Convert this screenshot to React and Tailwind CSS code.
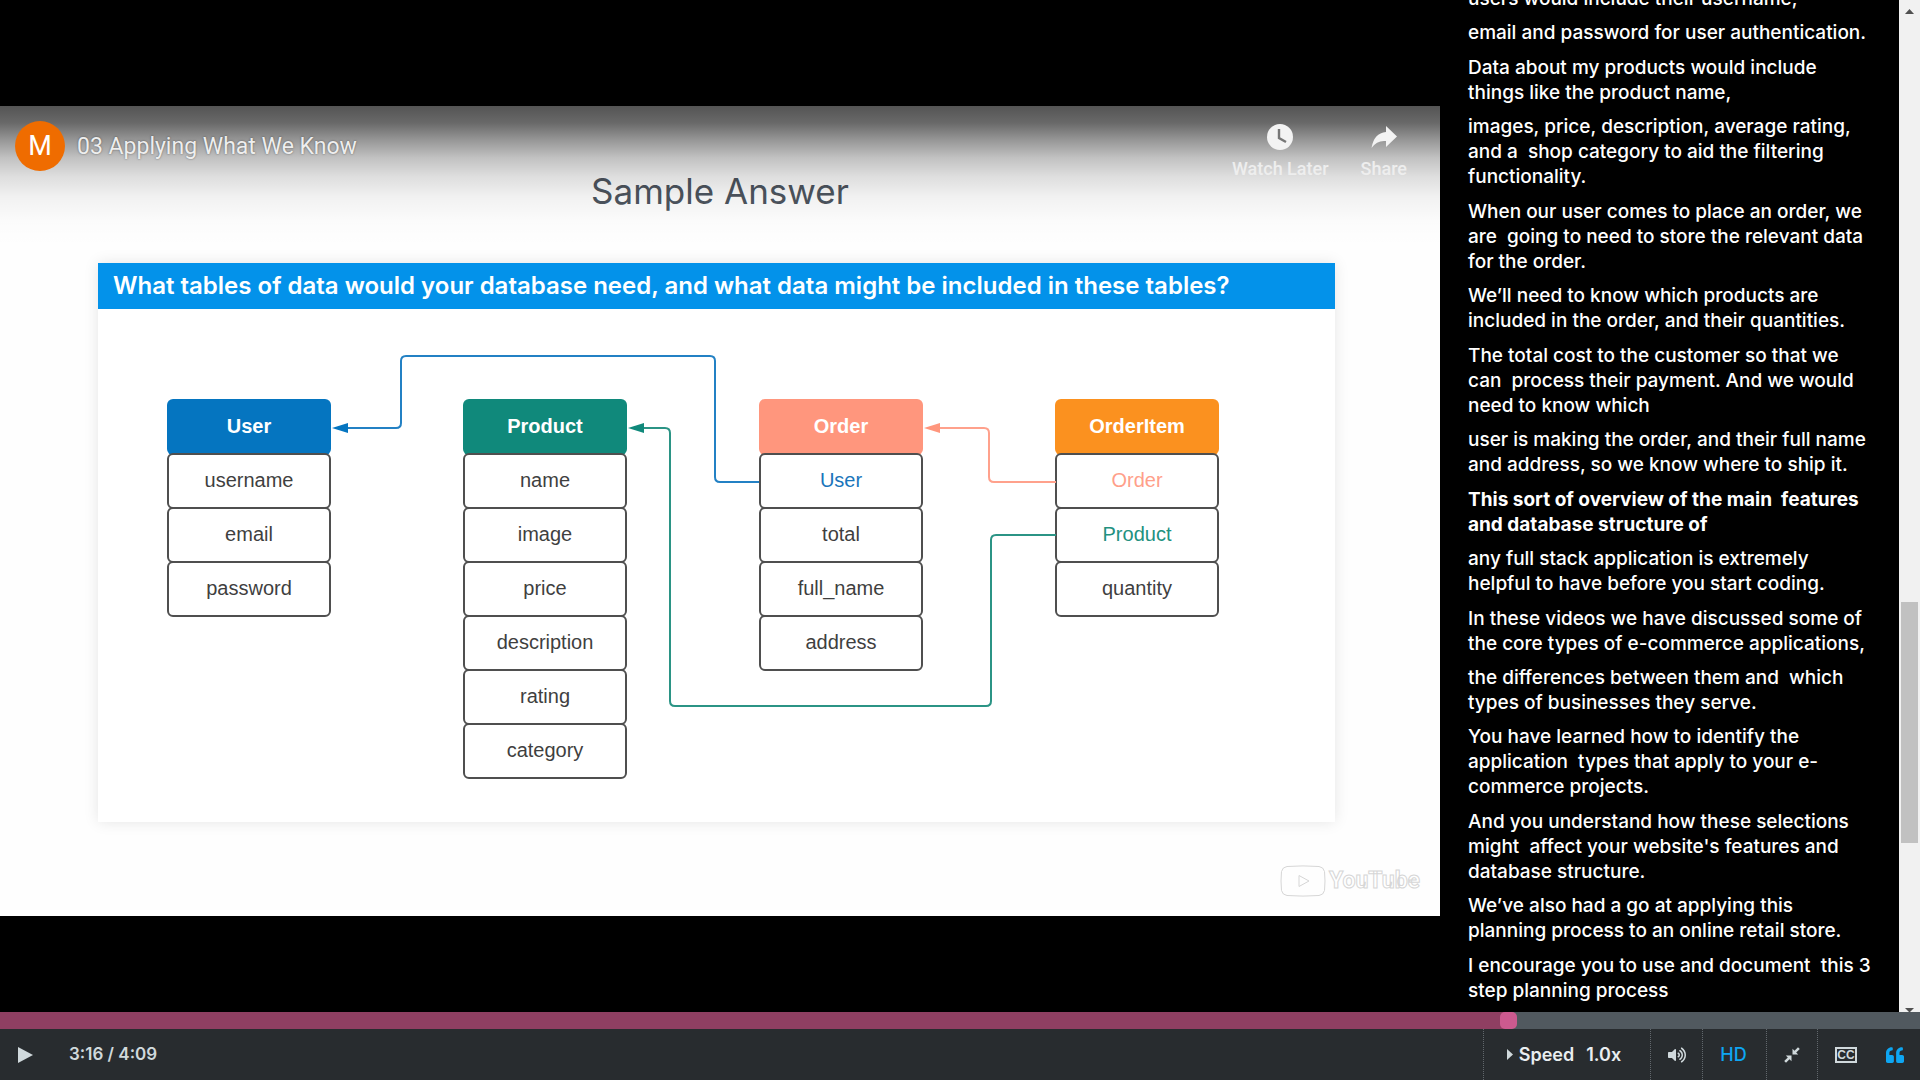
import { FaVolumeUp, FaQuoteLeft } from "react-icons/fa";

const transcript = [
  { text: "users would include their username," },
  { text: "email and password for user authentication." },
  { text: "Data about my products would include\nthings like the product name," },
  { text: "images, price, description, average rating,\nand a  shop category to aid the filtering\nfunctionality." },
  { text: "When our user comes to place an order, we\nare  going to need to store the relevant data\nfor the order." },
  { text: "We’ll need to know which products are\nincluded in the order, and their quantities." },
  { text: "The total cost to the customer so that we\ncan  process their payment. And we would\nneed to know which" },
  { text: "user is making the order, and their full name\nand address, so we know where to ship it." },
  { text: "This sort of overview of the main  features\nand database structure of", current: true },
  { text: "any full stack application is extremely\nhelpful to have before you start coding." },
  { text: "In these videos we have discussed some of\nthe core types of e-commerce applications," },
  { text: "the differences between them and  which\ntypes of businesses they serve." },
  { text: "You have learned how to identify the\napplication  types that apply to your e-\ncommerce projects." },
  { text: "And you understand how these selections\nmight  affect your website's features and\ndatabase structure." },
  { text: "We’ve also had a go at applying this\nplanning process to an online retail store." },
  { text: "I encourage you to use and document  this 3\nstep planning process" },
];

const tables = [
  { name: "User", head: "bg-[#0575c0]", rows: [["username"], ["email"], ["password"]] },
  {
    name: "Product",
    head: "bg-[#10897b]",
    rows: [["name"], ["image"], ["price"], ["description"], ["rating"], ["category"]],
  },
  {
    name: "Order",
    head: "bg-[#ff967d]",
    rows: [["User", "text-[#1a75bb]"], ["total"], ["full_name"], ["address"]],
  },
  {
    name: "OrderItem",
    head: "bg-[#fb911f]",
    rows: [["Order", "text-[#ff9f8a]"], ["Product", "text-[#22917f]"], ["quantity"]],
  },
];

function Connectors() {
  return (
    <svg
      className="pointer-events-none absolute left-0 top-0 h-[419px] w-[1052px] overflow-visible"
      viewBox="167 399 1052 419"
      fill="none"
      strokeWidth="2"
      aria-hidden="true"
    >
      <path stroke="#2381c4" d="M346 428H396Q401 428 401 423V361Q401 356 406 356H710Q715 356 715 361V477Q715 482 720 482H759" />
      <path fill="#0575c0" d="M332 428L348 423V433Z" />
      <path stroke="#2b9485" d="M642 428H665Q670 428 670 433V701Q670 706 675 706H986Q991 706 991 701V540Q991 535 996 535H1056" />
      <path fill="#10897b" d="M628 428L644 423V433Z" />
      <path stroke="#ffa18c" d="M938 428H984Q989 428 989 433V477Q989 482 994 482H1056" />
      <path fill="#ff967d" d="M924 428L940 423V433Z" />
    </svg>
  );
}

function Table({ name, head, rows }) {
  return (
    <div className="flex w-[164px] flex-col text-center font-['Liberation_Sans',sans-serif] text-xl text-[#3f3f3f]">
      <div className={`h-14 rounded-md leading-[54px] font-bold text-white ${head}`}>{name}</div>
      {rows.map(([label, tone]) => (
        <div
          key={label}
          className={`-mt-0.5 h-14 rounded-md border-2 border-[#4f4f4f] bg-white leading-[50px] ${tone || ""}`}
        >
          {label}
        </div>
      ))}
    </div>
  );
}

function Video() {
  return (
    <section className="relative flex aspect-video w-full flex-col items-center overflow-hidden bg-[#fefefe]">
      <h1 className="mt-[65px] text-[35px] leading-10 text-[#4d555f]">Sample Answer</h1>
      <div className="mt-[52px] mr-[7px] h-[559px] w-[1237px] bg-white shadow-[0_0_14px_rgba(0,0,0,0.1)]">
        <h2 className="h-[46px] bg-[#0392ea] pl-[15px] text-2xl leading-[46px] font-semibold whitespace-nowrap text-white">
          What tables of data would your database need, and what data might be included in these tables?
        </h2>
        <div className="relative mt-[90px] ml-[69px] flex items-start gap-[132px]">
          {tables.map((t) => (
            <Table key={t.name} {...t} />
          ))}
          <Connectors />
        </div>
      </div>

      <header className="absolute inset-x-0 top-0 flex h-[140px] items-start bg-[linear-gradient(to_bottom,rgba(0,0,0,0.67)_0%,rgba(0,0,0,0.59)_12%,rgba(0,0,0,0.41)_24%,rgba(0,0,0,0.24)_37%,rgba(0,0,0,0.13)_50%,rgba(0,0,0,0.05)_65%,rgba(0,0,0,0.01)_82%,transparent_100%)] pt-[15px] pr-[33px] pl-[15px] font-[Roboto,sans-serif] text-[#eee]">
        <a href="#channel" className="flex size-[50px] items-center justify-center rounded-full bg-[#ef6c00] text-[27px] text-white">
          M
        </a>
        <a href="#video" className="ml-3 text-[23px] leading-[52px] [text-shadow:0_0_2px_rgba(0,0,0,0.5)]">
          03 Applying What We Know
        </a>
        <div className="ml-auto flex gap-8 text-lg leading-6 font-medium [text-shadow:0_0_3px_rgba(0,0,0,0.6)]">
          <button className="flex flex-col items-center gap-1">
            <svg className="h-8 w-9" viewBox="0 0 36 32" aria-hidden="true">
              <circle cx="18" cy="16" r="13" fill="#f3f3f3" />
              <path d="M17 8V17L24 21" fill="none" stroke="#777" strokeWidth="2.4" />
            </svg>
            Watch Later
          </button>
          <button className="flex flex-col items-center gap-1">
            <svg className="h-8 w-9" viewBox="0 0 36 32" aria-hidden="true">
              <path fill="#f3f3f3" d="M20 5L31 15.500L20 26V20Q11 19 5.500 27Q8 12 20 11Z" />
            </svg>
            Share
          </button>
        </div>
      </header>

      <a
        href="#youtube"
        aria-label="YouTube"
        className="absolute right-5 bottom-[17px] flex items-center gap-[3px] font-[Roboto,sans-serif] text-[23px] leading-9 font-bold text-white [-webkit-text-stroke:1px_#d6d6d6]"
      >
        <svg className="h-8 w-[46px]" viewBox="0 0 46 32" fill="none" stroke="#d6d6d6" aria-hidden="true">
          <path d="M7 1.500Q23 .3 39 1.500Q43.500 2 44.500 6.500Q45.500 16 44.500 25.500Q43.500 30 39 30.500Q23 31.700 7 30.500Q2.500 30 1.500 25.500Q.5 16 1.500 6.500Q2.500 2 7 1.500Z" />
          <path d="M19 10.500V21.500L29 16Z" />
        </svg>
        YouTube
      </a>
    </section>
  );
}

function Transcript() {
  return (
    <aside className="flex w-1/4 overflow-hidden">
      <ol className="flex flex-1 flex-col justify-between pb-[9px] pl-[28px] text-[19px] leading-[25px] font-medium whitespace-pre text-white">
        {transcript.map(({ text, current }) => (
          <li key={text} className={`first:-mt-3.5 ${current ? "font-bold" : ""}`}>
            {text}
          </li>
        ))}
      </ol>
      <div className="flex w-[21px] flex-col items-center bg-[#f1f1f1] pt-[9px]">
        <svg className="h-[5px] w-[9px]" viewBox="0 0 9 5" fill="#505050" aria-hidden="true">
          <path d="M0 5L4.500 0L9 5Z" />
        </svg>
        <div className="mt-[588px] h-[241px] w-[17px] bg-[#c1c1c1]" />
        <svg className="mt-auto h-1 w-[9px]" viewBox="0 0 9 4" fill="#505050" aria-hidden="true">
          <path d="M0 0H9L5 4H4Z" />
        </svg>
      </div>
    </aside>
  );
}

function Controls() {
  const cell = "flex items-center justify-center border-l border-dotted border-[#62686d]";
  return (
    <footer className="bg-[#282c2f] text-[#d0d9dc]">
      <input
        type="range"
        aria-label="Video position"
        min="0"
        max="1000"
        defaultValue="788"
        className="block h-[17px] w-full appearance-none bg-[linear-gradient(to_right,#8f3f62_78.5%,#51595f_78.5%)] [&::-webkit-slider-thumb]:size-[17px] [&::-webkit-slider-thumb]:appearance-none [&::-webkit-slider-thumb]:rounded-[5px] [&::-webkit-slider-thumb]:bg-[#cc5a8f]"
      />
      <div className="flex h-[51px] items-stretch">
        <button aria-label="Play" className="pl-[18px]">
          <svg className="h-4 w-[15px]" viewBox="0 0 15 16" fill="currentColor" aria-hidden="true">
            <path d="M0 0L15 8L0 16Z" />
          </svg>
        </button>
        <div className="ml-9 self-center text-[17px] font-semibold">3:16 / 4:09</div>
        <button className={`${cell} ml-auto w-[167px] pr-1.5 text-lg font-semibold text-[#e9eef0]`}>
          <svg className="mr-1.5 h-[11px] w-1.5" viewBox="0 0 6 11" fill="#d0d9dc" aria-hidden="true">
            <path d="M0 0L6 5.500L0 11Z" />
          </svg>
          <span>Speed</span>
          <span className="ml-3">1.0x</span>
        </button>
        <button aria-label="Volume" className={`${cell} w-[52px]`}>
          <FaVolumeUp className="size-[18px]" />
        </button>
        <button className={`${cell} w-16 pr-0.5 text-lg font-medium text-[#0ea6f2]`}>HD</button>
        <button aria-label="Exit full browser" className={`${cell} w-[51px]`}>
          <svg className="size-4" viewBox="0 0 16 16" fill="currentColor" aria-hidden="true">
            <path d="M8.500 1.800L10.500 3.800L14 .2L15.800 2L12.200 5.500L14.200 7.500H8.500Z" />
            <path d="M7.500 14.200L5.500 12.200L2 15.800L.2 14L3.800 10.500L1.800 8.500H7.500Z" />
          </svg>
        </button>
        <button
          aria-label="Closed captions"
          className={`${cell} w-[57px]`}
        >
          <span className="flex h-4 w-[22px] items-center justify-center border-2 border-current font-['Liberation_Sans',sans-serif] text-xs leading-3 font-bold">
            CC
          </span>
        </button>
        <button aria-label="Transcript" className="flex w-[46px] items-center pl-3 text-[#0ea6f2]">
          <FaQuoteLeft className="size-[18px]" />
        </button>
      </div>
    </footer>
  );
}

export default function App() {
  return (
    <div className="flex h-screen flex-col overflow-hidden bg-black font-[Inter,sans-serif]">
      <main className="flex min-h-0 flex-1">
        <div className="flex flex-1 items-center pt-2.5">
          <Video />
        </div>
        <Transcript />
      </main>
      <Controls />
    </div>
  );
}
